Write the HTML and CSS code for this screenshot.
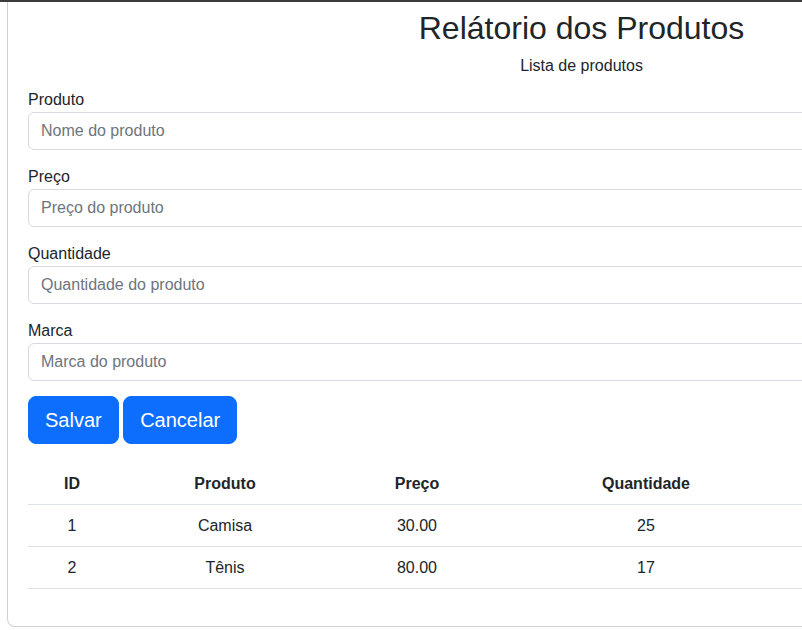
FILE: index.html
```html
<!DOCTYPE html>
<html lang="pt-BR">
<head>
<meta charset="utf-8">
<title>Relátorio dos Produtos</title>
<link rel="stylesheet" href="styles.css">
</head>
<body>
<div class="topbar"></div>
<div class="page">
  <div class="card">
    <h1 class="title">Relátorio dos Produtos</h1>
    <p class="subtitle">Lista de produtos</p>
    <form class="form">
      <div class="field">
        <label class="label" for="produto">Produto</label>
        <input class="input" id="produto" type="text" placeholder="Nome do produto">
      </div>
      <div class="field">
        <label class="label" for="preco">Preço</label>
        <input class="input" id="preco" type="text" placeholder="Preço do produto">
      </div>
      <div class="field">
        <label class="label" for="quantidade">Quantidade</label>
        <input class="input" id="quantidade" type="text" placeholder="Quantidade do produto">
      </div>
      <div class="field">
        <label class="label" for="marca">Marca</label>
        <input class="input" id="marca" type="text" placeholder="Marca do produto">
      </div>
      <div class="actions">
        <button type="button" class="btn">Salvar</button>
        <button type="button" class="btn">Cancelar</button>
      </div>
    </form>
    <table class="table">
      <colgroup>
        <col class="c-id">
        <col class="c-produto">
        <col class="c-preco">
        <col class="c-qtd">
        <col class="c-rest">
      </colgroup>
      <thead>
        <tr><th>ID</th><th>Produto</th><th>Preço</th><th>Quantidade</th><th></th></tr>
      </thead>
      <tbody>
        <tr><td>1</td><td>Camisa</td><td>30.00</td><td>25</td><td></td></tr>
        <tr><td>2</td><td>Tênis</td><td>80.00</td><td>17</td><td></td></tr>
      </tbody>
    </table>
  </div>
</div>
</body>
</html>
```

FILE: styles.css
```css
html, body {
  margin: 0;
  padding: 0;
  overflow: hidden;
}
body {
  font-family: "Liberation Sans", Arial, sans-serif;
  font-size: 16px;
  line-height: 1.5;
  color: #212529;
  background: #ffffff;
}
.topbar {
  height: 2px;
  background: #3c3c3c;
}
.page {
  padding-left: 7px;
  width: 1200px;
}
.card {
  box-sizing: border-box;
  width: 1149px;
  border: 1px solid #d0d0d0;
  border-top: none;
  border-radius: 0 0 8px 8px;
  padding: 7px 20px 21px;
}
.title {
  margin: 0 0 7px;
  font-size: 32px;
  font-weight: 400;
  line-height: 1.2;
  text-align: center;
}
.subtitle {
  margin: 0 0 10px;
  text-align: center;
}
.form {
  margin: 0 0 19px;
}
.field {
  margin-bottom: 15px;
  display: flex;
  flex-direction: column;
}
.label {
  line-height: 24px;
}
.input {
  box-sizing: border-box;
  width: 100%;
  height: 38px;
  padding: 6px 12px;
  font: inherit;
  color: #212529;
  border: 1px solid #d6dadf;
  border-radius: 6px;
  outline: none;
}
.input::placeholder {
  color: #6c757d;
}
.btn {
  font: inherit;
  font-size: 20px;
  line-height: 30px;
  padding: 8px 16px;
  border: 1px solid #0d6efd;
  border-radius: 8px;
  background: #0d6efd;
  color: #ffffff;
  cursor: pointer;
}
.table {
  width: 100%;
  table-layout: fixed;
  border-collapse: collapse;
  margin-bottom: 16px;
  text-align: center;
}
.c-id { width: 88px; }
.c-produto { width: 218px; }
.c-preco { width: 166px; }
.c-qtd { width: 292px; }
.table th,
.table td {
  padding: 9px 8px 8px;
  line-height: 24px;
  border-bottom: 1px solid #dee2e6;
}
.table th {
  font-weight: 700;
}
```
